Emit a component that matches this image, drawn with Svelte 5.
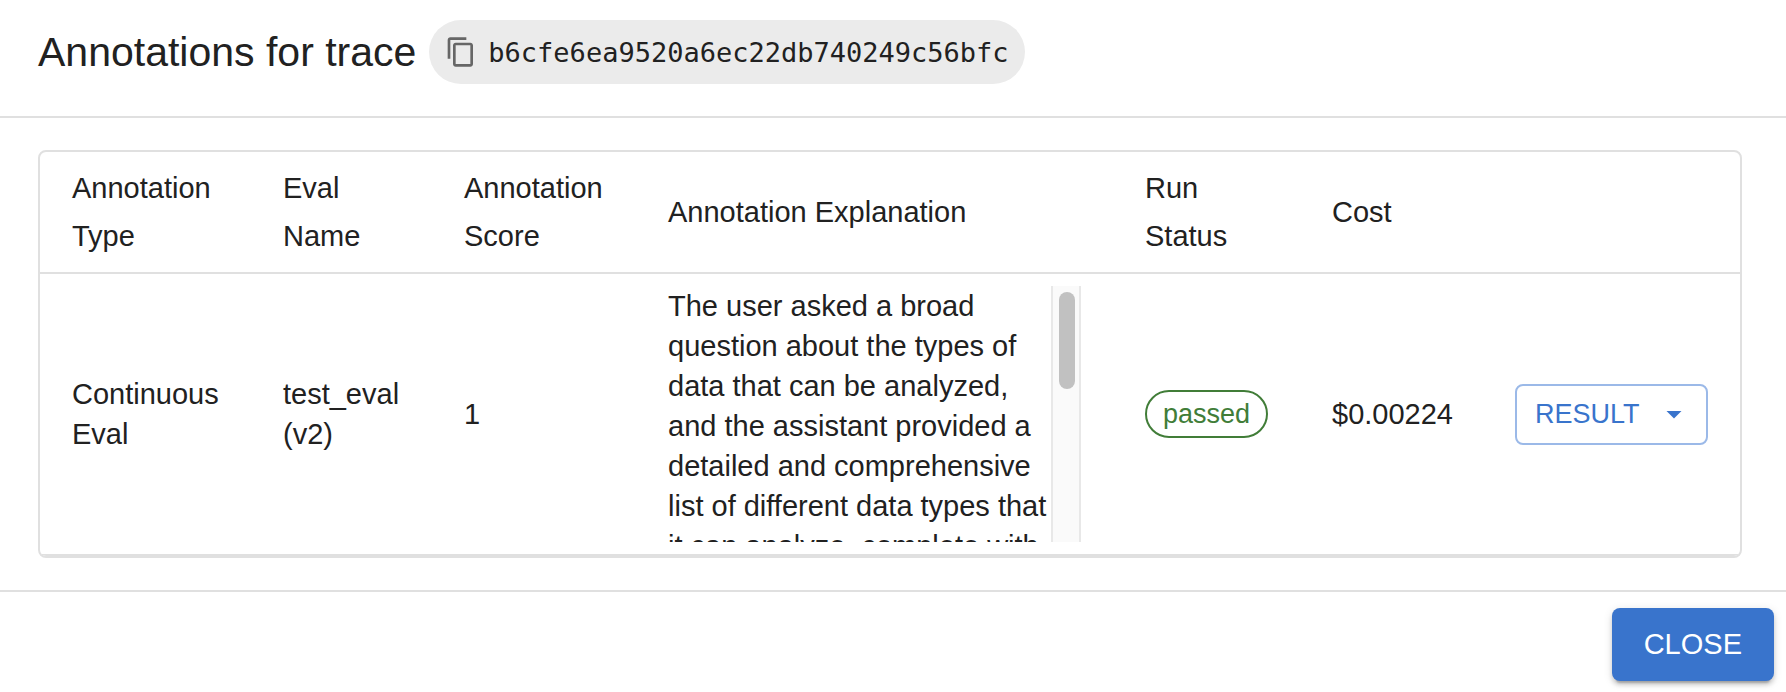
<script lang="ts">
	interface Annotation {
		type: string;
		evalName: string;
		score: number;
		explanation: string;
		status: string;
		cost: string;
	}

	export let traceId: string = 'b6cfe6ea9520a6ec22db740249c56bfc';
	export let annotations: Annotation[] = [
		{
			type: 'Continuous Eval',
			evalName: 'test_eval (v2)',
			score: 1,
			explanation:
				'The user asked a broad question about the types of data that can be analyzed, and the assistant provided a detailed and comprehensive list of different data types that it can analyze, complete with',
			status: 'passed',
			cost: '$0.00224'
		}
	];

	let open = true;

	function copyTraceId() {
		navigator.clipboard?.writeText(traceId);
	}

	function close() {
		open = false;
	}
</script>

{#if open}
	<div class="dialog" role="dialog" aria-labelledby="dialog-title">
		<header class="dialog-header">
			<h2 id="dialog-title">Annotations for trace</h2>
			<button class="trace-chip" type="button" on:click={copyTraceId}>
				<svg class="copy-icon" viewBox="0 0 24 24" aria-hidden="true">
					<path
						d="M16 1H4c-1.100 0-2 .9-2 2v14h2V3h12V1zm3 4H8c-1.100 0-2 .9-2 2v14c0 1.100.9 2 2 2h11c1.100 0 2-.9 2-2V7c0-1.100-.9-2-2-2zm0 16H8V7h11v14z"
					/>
				</svg>
				<span>{traceId}</span>
			</button>
		</header>

		<div class="dialog-content">
			<div class="table-container">
				<table>
					<colgroup>
						<col class="col-type" />
						<col class="col-name" />
						<col class="col-score" />
						<col />
						<col class="col-status" />
						<col class="col-cost" />
						<col class="col-action" />
					</colgroup>
					<thead>
						<tr>
							<th>Annotation Type</th>
							<th>Eval Name</th>
							<th>Annotation Score</th>
							<th>Annotation Explanation</th>
							<th>Run Status</th>
							<th>Cost</th>
							<th></th>
						</tr>
					</thead>
					<tbody>
						{#each annotations as annotation}
							<tr>
								<td>{annotation.type}</td>
								<td>{annotation.evalName}</td>
								<td>{annotation.score}</td>
								<td>
									<div class="explanation">
										<div class="explanation-text">{annotation.explanation}</div>
										<div class="scroll-track">
											<div class="scroll-thumb"></div>
										</div>
									</div>
								</td>
								<td><span class="status">{annotation.status}</span></td>
								<td>{annotation.cost}</td>
								<td>
									<button class="result-button" type="button" aria-haspopup="menu">
										RESULT
										<svg class="arrow-icon" viewBox="0 0 24 24" aria-hidden="true">
											<path d="M7 10l5 5 5-5z" />
										</svg>
									</button>
								</td>
							</tr>
						{/each}
					</tbody>
				</table>
			</div>
		</div>

		<footer class="dialog-actions">
			<button class="close-button" type="button" on:click={close}>CLOSE</button>
		</footer>
	</div>
{/if}

<style>
	:global(body) {
		margin: 0;
		background: #fff;
	}

	.dialog {
		font-family: 'Liberation Sans', Arial, sans-serif;
		font-size: 29px;
		line-height: 40px;
		color: #212121;
	}

	button {
		font-family: inherit;
		cursor: pointer;
	}

	.dialog-header {
		display: flex;
		align-items: center;
		gap: 13px;
		padding: 20px 38px 32px;
	}

	h2 {
		margin: 0;
		font-size: 41px;
		font-weight: 400;
		line-height: 64px;
	}

	.trace-chip {
		display: inline-flex;
		align-items: center;
		gap: 11px;
		height: 64px;
		padding: 0 16px;
		border: 0;
		border-radius: 32px;
		background: #ebebeb;
		color: #212121;
		font-family: 'DejaVu Sans Mono', Menlo, monospace;
		font-size: 27px;
	}

	.copy-icon {
		width: 32px;
		height: 32px;
		fill: #666;
	}

	.dialog-content {
		padding: 32px 44px 32px 38px;
		border-top: 2px solid #e0e0e0;
		border-bottom: 2px solid #e0e0e0;
	}

	.table-container {
		border: 2px solid #e0e0e0;
		border-radius: 8px;
		overflow: hidden;
	}

	table {
		width: 100%;
		table-layout: fixed;
		border-collapse: separate;
		border-spacing: 0;
	}

	.col-type {
		width: 211px;
	}

	.col-name {
		width: 181px;
	}

	.col-score {
		width: 204px;
	}

	.col-status {
		width: 187px;
	}

	.col-cost {
		width: 183px;
	}

	.col-action {
		width: 257px;
	}

	th,
	td {
		padding: 12px 32px;
		border-bottom: 2px solid #e0e0e0;
		font-weight: 400;
		text-align: left;
		vertical-align: middle;
	}

	th {
		line-height: 48px;
	}

	.explanation {
		display: flex;
		height: 256px;
	}

	.explanation-text {
		flex: 1;
		overflow: hidden;
	}

	.scroll-track {
		box-sizing: border-box;
		width: 30px;
		padding: 6px;
		border: solid #e8e8e8;
		border-width: 0 2px;
		background: #fafafa;
	}

	.scroll-thumb {
		width: 16px;
		height: 97px;
		border-radius: 8px;
		background: #c1c1c1;
	}

	.status {
		display: inline-block;
		padding: 0 16px;
		border: 2px solid #417d38;
		border-radius: 24px;
		color: #417d38;
		font-size: 27px;
		line-height: 44px;
		vertical-align: middle;
	}

	.result-button {
		display: flex;
		align-items: center;
		justify-content: space-between;
		width: 100%;
		height: 61px;
		padding: 0 14px 0 18px;
		border: 2px solid #9bb9e8;
		border-radius: 8px;
		background: #fff;
		color: #3974cc;
		font-size: 27px;
	}

	.arrow-icon {
		width: 36px;
		height: 36px;
		fill: currentColor;
	}

	.dialog-actions {
		display: flex;
		justify-content: flex-end;
		padding: 16px 12px 11px;
	}

	.close-button {
		height: 73px;
		padding: 0 32px;
		border: 0;
		border-radius: 8px;
		background: #3974cc;
		box-shadow:
			0 6px 2px -4px rgba(0, 0, 0, 0.2),
			0 4px 4px rgba(0, 0, 0, 0.14),
			0 2px 10px rgba(0, 0, 0, 0.12);
		color: #fff;
		font-size: 29px;
	}

	.result-button:hover {
		background: #f3f7fd;
	}

	.close-button:hover {
		background: #2c5fac;
	}
</style>
